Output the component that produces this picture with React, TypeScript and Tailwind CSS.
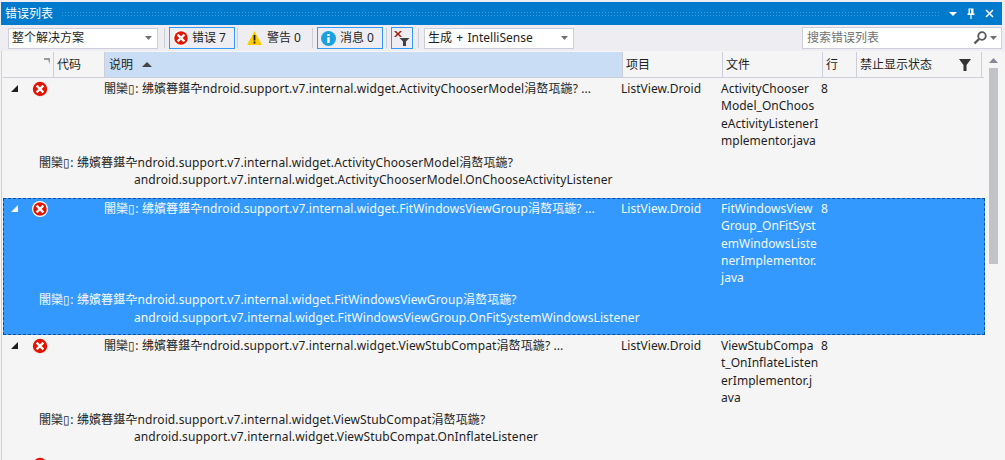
import React from "react";

const font = { fontFamily: '"Noto Sans", "Noto Sans CJK SC", sans-serif' };

function ErrorIcon({ ring, size = 16 }: { ring?: boolean; size?: number }) {
  return (
    <svg width={size} height={size} viewBox="0 0 16 16" className="shrink-0">
      {ring && <circle cx="8" cy="8" r="8" fill="#ffffff" />}
      <circle cx="8" cy="8" r={ring ? 6.8 : 7.2} fill="#e51400" />
      <path d="M5.4 5.4l5.2 5.2M10.6 5.4l-5.2 5.2" stroke="#fff" strokeWidth="2.2" strokeLinecap="square" />
    </svg>
  );
}

function Caret() {
  return (
    <svg width="7" height="4" viewBox="0 0 7 4" className="shrink-0">
      <path d="M0 0h7L3.5 4z" fill="#717171" />
    </svg>
  );
}

function Sep({ className }: { className: string }) {
  return <div className={`h-[20px] w-px shrink-0 bg-[#ccced6] ${className}`} />;
}

function Combo({ label, className }: { label: string; className: string }) {
  return (
    <div className={`flex h-[21px] shrink-0 items-center justify-between border border-[#cccedb] bg-white pl-[3px] pr-[5px] ${className}`}>
      <span>{label}</span>
      <Caret />
    </div>
  );
}

function HeaderCell({ children, width, active }: { children?: React.ReactNode; width: string; active?: boolean }) {
  return (
    <div className={`flex h-full shrink-0 items-center border-r border-[#cccedb] ${width} ${active ? "bg-[#c9def5] pl-[4px]" : "pl-[3px]"}`}>
      {children}
    </div>
  );
}

type RowData = {
  cls: string;
  iface: string;
  file: string[];
  height: string;
  selected?: boolean;
};

const rows: RowData[] = [
  {
    cls: "ActivityChooserModel",
    iface: "ActivityChooserModel.OnChooseActivityListener",
    file: ["ActivityChooser", "Model_OnChoos", "eActivityListenerI", "mplementor.java"],
    height: "h-[120px]",
  },
  {
    cls: "FitWindowsViewGroup",
    iface: "FitWindowsViewGroup.OnFitSystemWindowsListener",
    file: ["FitWindowsView", "Group_OnFitSyst", "emWindowsListe", "nerImplementor.", "java"],
    height: "h-[137px]",
    selected: true,
  },
  {
    cls: "ViewStubCompat",
    iface: "ViewStubCompat.OnInflateListener",
    file: ["ViewStubCompa", "t_OnInflateListen", "erImplementor.j", "ava"],
    height: "h-[120px]",
  },
];

const line = "h-[17.3px] whitespace-nowrap tracking-[0.11px]";

function Row({ r }: { r: RowData }) {
  const prefix = "闇欒▯: 绋嬪簭鍖卆ndroid.support.v7.internal.widget.";
  return (
    <div
      className={`${r.height} w-[982px] border border-dashed pt-[1px] ${
        r.selected ? "border-[#0b4f94] bg-[#3399ff] text-[#f4f9ff]" : "border-transparent text-[#1e1e1e]"
      }`}
    >
      <div className="flex">
        <div className="flex w-[24px] shrink-0 pl-[7px] pt-[5px]">
          <svg width="7" height="7" viewBox="0 0 7 7">
            <path d="M7 0v7H0z" fill={r.selected ? "#ffffff" : "#1e1e1e"} />
          </svg>
        </div>
        <div className="flex w-[76px] shrink-0 pl-[4px] pt-[1px]">
          <ErrorIcon ring={r.selected} />
        </div>
        <div className={`w-[517px] shrink-0 ${line}`}>{prefix}{r.cls}涓嶅瓨鍦? ...</div>
        <div className="h-[17.3px] w-[100px] shrink-0 tracking-[0.03px]">ListView.Droid</div>
        <div className="w-[100px] shrink-0">
          {r.file.map((f) => (
            <div key={f} className="h-[17.3px] whitespace-nowrap tracking-[0.03px]">{f}</div>
          ))}
        </div>
        <div>8</div>
      </div>
      <div className={`mt-[5px] pl-[35px] ${line}`}>{prefix}{r.cls}涓嶅瓨鍦?</div>
      <div className={`pl-[130px] ${line}`}>android.support.v7.internal.widget.{r.iface}</div>
    </div>
  );
}

export default function App() {
  return (
    <div
      style={font}
      className="flex h-[460px] w-[1005px] flex-col overflow-hidden bg-[#eeeef2] pt-[2px] text-[12px] leading-[17.3px] text-[#1e1e1e]"
    >
      <div className="ml-[1px] mr-[3px] flex h-[23px] shrink-0 items-center bg-[#007acc] pl-[4px] pr-[8px] text-white">
        <span className="text-[12px]">错误列表</span>
        <div className="ml-[8px] mr-[9px] h-[5px] flex-1 bg-[radial-gradient(#3f9bd8_0.7px,transparent_0.7px)] bg-[length:3px_3px]" />
        <div className="flex items-center gap-[10px]">
          <svg width="8" height="4" viewBox="0 0 8 4"><path d="M0 0h8L4 4z" fill="#fff" /></svg>
          <svg width="8" height="11" viewBox="0 0 8 11"><path d="M1.5.5h5v5h1V7H4.6v4H3.4V7H.5V5.5h1zM3 1.5v4h1v-4z" fill="#fff" /></svg>
          <svg width="9" height="9" viewBox="0 0 9 9"><path d="M1 1l7 7M8 1L1 8" stroke="#fff" strokeWidth="1.6" /></svg>
        </div>
      </div>

      <div className="flex h-[26px] shrink-0 items-center pl-[8px]">
        <Combo label="整个解决方案" className="w-[150px]" />
        <Sep className="ml-[6px] mr-[4px]" />
        <div className="flex h-[22px] w-[66px] shrink-0 items-center border border-[#3399ff] pl-[3px]">
          <ErrorIcon ring size={16} />
          <span className="ml-[3px]">错误 7</span>
        </div>
        <Sep className="ml-[2px] mr-[2px]" />
        <div className="flex h-[22px] w-[72px] shrink-0 items-center gap-[5px] pl-[7px]">
          <svg width="15" height="14" viewBox="0 0 15 14" className="shrink-0">
            <path d="M7.5 0L15 14H0z" fill="#ffcc00" />
            <path d="M6.6 4h1.8v5.5H6.6zM6.6 10.5h1.8v2H6.6z" fill="#1e1e1e" />
          </svg>
          <span>警告 0</span>
        </div>
        <Sep className="mr-[4px]" />
        <div className="flex h-[22px] w-[66px] shrink-0 items-center gap-[4px] border border-[#3399ff] pl-[3px]">
          <svg width="15" height="15" viewBox="0 0 15 15" className="shrink-0">
            <circle cx="7.5" cy="7.5" r="7.5" fill="#1ba1e2" />
            <path d="M6.3 3h2.4v2H6.3zM6.3 6.2h2.4V12H6.3z" fill="#fff" />
          </svg>
          <span>消息 0</span>
        </div>
        <Sep className="ml-[3px] mr-[4px]" />
        <div className="flex h-[22px] w-[22px] shrink-0 items-center justify-center border border-[#3399ff]">
          <svg width="16" height="15" viewBox="0 0 16 15">
            <path d="M0 0h2l2 2 2-2h2L5.2 3 8 6H6L4 4 2 6H0l2.8-3z" fill="#a1260d" />
            <path d="M5.5 7h10L12 10.5V15H9v-4.5z" fill="#424242" />
          </svg>
        </div>
        <Sep className="ml-[5px] mr-[5px]" />
        <Combo label="生成 + IntelliSense" className="w-[150px] [word-spacing:1.2px]" />
        <div className="ml-[228px] flex h-[22px] w-[200px] shrink-0 items-center justify-between border border-[#cccedb] bg-white pl-[4px] pr-[4px] text-[#717171]">
          <span>搜索错误列表</span>
          <div className="flex items-center gap-[3px]">
            <svg width="14" height="14" viewBox="0 0 14 14">
              <circle cx="9" cy="5" r="3.8" fill="none" stroke="#595959" strokeWidth="1.8" />
              <path d="M6 8l-4.5 4.5" stroke="#595959" strokeWidth="2.4" />
            </svg>
            <Caret />
          </div>
        </div>
      </div>

      <div className="flex min-h-0 flex-1 bg-[#f5f5f5] pl-[1px]">
        <div className="min-w-0 flex-1 border-l border-[#cccedb] pl-[1px]">
          <div className="mt-[1px] flex h-[26px] border-b border-[#cccedb] pl-[25px] text-[#1e1e1e]">
            <HeaderCell width="w-[26px]">
              <svg width="6" height="6" viewBox="0 0 6 6" className="-mt-[8px] ml-[13px] shrink-0">
                <path d="M0 0h6v6L4 2H0z" fill="#9a9a9a" />
              </svg>
            </HeaderCell>
            <HeaderCell width="w-[51px]">代码</HeaderCell>
            <HeaderCell width="w-[518px]" active>
              说明
              <svg width="10" height="5" viewBox="0 0 10 5" className="ml-[9px] shrink-0">
                <path d="M5 0l5 5H0z" fill="#444" />
              </svg>
            </HeaderCell>
            <HeaderCell width="w-[100px]">项目</HeaderCell>
            <HeaderCell width="w-[100px]">文件</HeaderCell>
            <HeaderCell width="w-[34px]">行</HeaderCell>
            <HeaderCell width="w-[125px]">
              <span className="flex-1">禁止显示状态</span>
              <svg width="12" height="12" viewBox="0 0 12 12" className="mr-[10px] shrink-0">
                <path d="M0 0h12L7.5 6v6h-3V6z" fill="#333" />
              </svg>
            </HeaderCell>
          </div>
          {rows.map((r) => (
            <Row key={r.cls} r={r} />
          ))}
          <div className="pl-[29px] pt-[2px]">
            <ErrorIcon />
          </div>
        </div>
        <div className="flex w-[21px] shrink-0 flex-col items-center pr-[2px] pt-[7px]">
          <svg width="9" height="5" viewBox="0 0 9 5" className="mb-[5px]">
            <path d="M4.5 0L9 5H0z" fill="#868999" />
          </svg>
          <div className="h-[196px] w-[9px] bg-[#c2c3c9]" />
        </div>
      </div>
    </div>
  );
}
